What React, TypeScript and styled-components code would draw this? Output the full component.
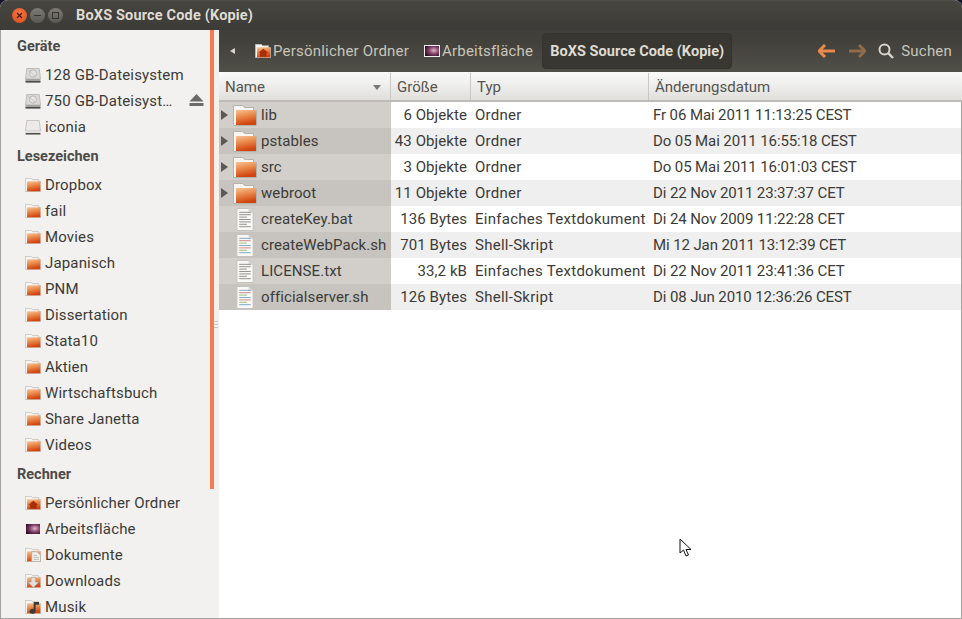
import React from "react";
import styled, { createGlobalStyle } from "styled-components";

const GlobalStyle = createGlobalStyle`
  html, body {
    margin: 0;
    padding: 0;
    background: #14142a;
  }
  body {
    font-family: Roboto, "Liberation Sans", sans-serif;
    font-size: 15px;
    color: #3c3b37;
  }
`;

const Window = styled.div`
  position: relative;
  width: 962px;
  height: 619px;
  overflow: hidden;
  display: flex;
  flex-direction: column;
  border-radius: 8px 8px 0 0;
  background: #f2f1ef;
`;

const TitleBar = styled.div`
  height: 30px;
  flex: none;
  box-sizing: border-box;
  display: flex;
  align-items: center;
  padding: 0 0 0 12px;
  background: linear-gradient(#52514c 0, #46453f 2px, #3c3b37 100%);
`;

const Controls = styled.div`
  display: flex;
  gap: 3px;
  margin-right: 13px;
`;

const WinButton = styled.div<{ $close?: boolean }>`
  width: 15px;
  height: 15px;
  border-radius: 50%;
  display: flex;
  align-items: center;
  justify-content: center;
  background: ${(p) =>
    p.$close
      ? "radial-gradient(circle at 50% 35%, #f47a45, #d9481c)"
      : "linear-gradient(#7b7a75, #5a5954)"};
`;

const Title = styled.div`
  font-weight: 700;
  font-size: 14.5px;
  color: #dfdbd2;
  letter-spacing: 0.17px;
`;

const Body = styled.div`
  flex: 1;
  min-height: 0;
  display: flex;
`;

const Sidebar = styled.div`
  position: relative;
  width: 219px;
  flex: none;
  box-sizing: border-box;
  overflow: hidden;
  border-left: 1px solid #a5a39d;
  border-bottom: 1px solid #a5a39d;
  background: #f2f1ef;
`;

const ScrollThumb = styled.div`
  position: absolute;
  top: 0;
  left: 209px;
  width: 4px;
  height: 459px;
  background: #f47b4e;
`;

const Grip = styled.div`
  position: absolute;
  top: 291px;
  left: 213px;
  width: 4px;
  height: 8px;
  background: repeating-linear-gradient(#c9c7c3 0 1px, transparent 1px 3px);
`;

const SectionTitle = styled.div`
  height: 32px;
  display: flex;
  align-items: center;
  padding-left: 16px;
  font-weight: 700;
  font-size: 14.5px;
  color: #4c4b47;
`;

const SideRow = styled.div`
  height: 26px;
  display: flex;
  align-items: center;
  padding-left: 24px;
  white-space: nowrap;
  position: relative;
`;

const SideLabel = styled.span`
  margin-left: 4px;
  color: #3c3b37;
  letter-spacing: 0.16px;
`;

const EjectIcon = styled.svg`
  position: absolute;
  left: 188px;
  top: 6px;
`;

const Main = styled.div`
  flex: 1;
  min-width: 0;
  display: flex;
  flex-direction: column;
`;

const Toolbar = styled.div`
  height: 42px;
  flex: none;
  box-sizing: border-box;
  display: flex;
  align-items: center;
  padding: 0 10px 0 11px;
  color: #c9c5b9;
  background: linear-gradient(#3f3e39 0, #42413c 30%, #504f48 100%);
`;

const BackTriangle = styled.div`
  width: 0;
  height: 0;
  border-top: 3.5px solid transparent;
  border-bottom: 3.5px solid transparent;
  border-right: 5px solid #d8d5cd;
  margin-right: 20px;
`;

const Crumb = styled.div<{ $gap: number }>`
  display: flex;
  align-items: center;
  margin-right: ${(p) => p.$gap}px;
  white-space: nowrap;
`;

const CrumbText = styled.span`
  margin-left: 2px;
  letter-spacing: 0.2px;
`;

const ActiveCrumb = styled.div`
  height: 36px;
  width: 190px;
  box-sizing: border-box;
  display: flex;
  align-items: center;
  justify-content: center;
  border-radius: 4px;
  font-weight: 700;
  font-size: 14.5px;
  letter-spacing: 0.04px;
  white-space: nowrap;
  color: #dfdbd2;
  background: #383732;
  border: 1px solid #34332f;
`;

const NavGroup = styled.div`
  margin-left: auto;
  display: flex;
  align-items: center;
`;

const NavArrow = styled.svg<{ $gap: number }>`
  margin-right: ${(p) => p.$gap}px;
`;

const SearchLabel = styled.span`
  margin-left: 7px;
  color: #c9c5b9;
  letter-spacing: 0.2px;
`;

const ListHeader = styled.div`
  height: 30px;
  flex: none;
  box-sizing: border-box;
  padding-top: 1px;
  display: grid;
  grid-template-columns: 172px 80px 178px 1fr;
  background: linear-gradient(#fbfbfa, #e0dfdc);
  border-bottom: 2px solid #bdbbb7;
`;

const HeaderCell = styled.div`
  position: relative;
  display: flex;
  align-items: center;
  padding-left: 6px;
  color: #55544f;
  border-right: 1px solid #c9c7c3;
  &:last-child {
    border-right: none;
  }
`;

const SortArrow = styled.div`
  position: absolute;
  right: 9px;
  top: 12px;
  width: 0;
  height: 0;
  border-left: 4.5px solid transparent;
  border-right: 4.5px solid transparent;
  border-top: 5px solid #7a7975;
`;

const List = styled.div`
  flex: 1;
  background: #fff;
  border-right: 1px solid #a5a39d;
  border-bottom: 1px solid #a5a39d;
`;

const Row = styled.div<{ $even: boolean }>`
  height: 26px;
  display: grid;
  grid-template-columns: 172px 80px 178px 1fr;
  align-items: center;
  white-space: nowrap;
  background: ${(p) => (p.$even ? "#efefef" : "#fff")};
`;

const NameCell = styled.div<{ $even: boolean }>`
  height: 100%;
  display: flex;
  align-items: center;
  background: ${(p) => (p.$even ? "#c7c4bf" : "#d2cfcb")};
`;

const Expander = styled.div<{ $show: boolean }>`
  width: 0;
  height: 0;
  margin: 0 5px 0 2px;
  border-top: 5px solid transparent;
  border-bottom: 5px solid transparent;
  border-left: 7px solid ${(p) => (p.$show ? "#5a5955" : "transparent")};
`;

const FileName = styled.span`
  margin-left: 4px;
  letter-spacing: 0.08px;
`;

const SizeCell = styled.div`
  text-align: right;
  padding-right: 4px;
  letter-spacing: 0.08px;
`;

const TypeCell = styled.div`
  padding-left: 4px;
  letter-spacing: 0.27px;
`;

const DateCell = styled.div`
  padding-left: 4px;
  letter-spacing: -0.1px;
`;

const Cursor = styled.svg`
  position: absolute;
  left: 679px;
  top: 538px;
`;

type IconKind = "folder" | "home" | "docs" | "down" | "music";

// small places-style folder, overlay depends on kind
const FolderIcon = ({ size, kind = "folder", id }: { size: number; kind?: IconKind; id: string }) => {
  const h = size * 0.875;
  return (
    <svg width={size} height={h} viewBox="0 0 24 21" style={{ flex: "none" }}>
      <defs>
        <linearGradient id={id} x1="0" y1="0" x2="0.25" y2="1">
          <stop offset="0" stopColor="#f7c496" />
          <stop offset="0.45" stopColor="#eb8c4e" />
          <stop offset="1" stopColor="#d2440f" />
        </linearGradient>
      </defs>
      <path d="M0.5 0.5h9l2 2h9v3h3v15h-23z" fill="#f6f5f2" stroke="#b5b2ac" strokeWidth="1" />
      <rect x="3" y="5" width="20" height="15" fill={`url(#${id})`} />
      {kind === "home" && (
        <path d="M12.5 7l7.5 6h-2.5v6h-10v-6h-2.5z" fill="#a8300a" />
      )}
      {kind === "docs" && (
        <g>
          <path d="M10 5.5h8l5.5 5v10h-13.5z" fill="#efeeea" stroke="#a9a7a2" strokeWidth="1.2" />
          <path d="M13 11h5M13 14h8M13 17h8" stroke="#b5b3ae" strokeWidth="1.2" />
        </g>
      )}
      {kind === "down" && (
        <path d="M9 5h7v7h5l-8.5 8.5L4 12h5z" fill="#e0dedb" stroke="#8e8c88" strokeWidth="0.8" />
      )}
      {kind === "music" && (
        <path d="M13 3h8v4h-5v10a4.5 3.6 0 1 1-3-3.4z" fill="#3c3b37" />
      )}
    </svg>
  );
};

const DesktopIcon = ({ id }: { id: string }) => (
  <svg width="16" height="12" viewBox="0 0 16 12" style={{ flex: "none" }}>
    <defs>
      <radialGradient id={id} cx="0.62" cy="0.45" r="0.65">
        <stop offset="0" stopColor="#e0b4c6" />
        <stop offset="0.55" stopColor="#7a3a60" />
        <stop offset="1" stopColor="#2c0f26" />
      </radialGradient>
    </defs>
    <rect x="0.5" y="0.5" width="15" height="11" fill={`url(#${id})`} stroke="#f2f1ef" />
  </svg>
);

const DiskIcon = ({ removable }: { removable?: boolean }) => (
  <svg width="16" height="15" viewBox="0 0 16 15" style={{ flex: "none" }}>
    <path
      d="M1.8 0.5h12.4l1.3 10.5h-15z"
      fill={removable ? "#ebeae8" : "#d9d9d7"}
      stroke={removable ? "#bcbbb8" : "#b4b3b0"}
      strokeWidth="0.8"
    />
    {!removable && (
      <>
        <circle cx="8" cy="5.5" r="3.6" fill="#e4e4e2" stroke="#a9a8a5" strokeWidth="0.7" />
        <path d="M4 2.5l6 6" stroke="#b4b3b0" strokeWidth="0.7" />
      </>
    )}
    <rect x="0.5" y="11" width="15" height="3.5" rx="0.8" fill={removable ? "#e2e1df" : "#a2a1a0"} />
    <rect x="0.5" y="13" width="15" height="1.5" rx="0.6" fill="#4d4c49" />
  </svg>
);

const TextFileIcon = ({ script }: { script?: boolean }) => {
  const lines = [4, 6.5, 9, 11.5, 14, 16.5, 19];
  const colors = ["#4a86b5", "#c0504d", "#6aa84f", "#4a86b5", "#c0504d", "#6aa84f", "#4a86b5"];
  return (
    <svg
      width="18"
      height="23"
      viewBox="0 0 18 24"
      style={{ flex: "none", marginLeft: "3px", marginRight: "3px" }}
    >
      <path d="M0.5 0.5h12l5 5v18h-17z" fill="#f8f8f6" stroke="#c2c0bb" />
      <path d="M12.5 0.5v5h5z" fill="#dededa" />
      {lines.map((y, i) => (
        <rect
          key={y}
          x="3"
          y={y}
          width={i % 3 === 2 ? 8 : 12}
          height="1"
          fill={script ? colors[i] : "#8f8e8a"}
          opacity={script ? 0.7 : 1}
        />
      ))}
    </svg>
  );
};

type Entry = { name: string; size: string; type: string; date: string; kind: "dir" | "text" | "script" };

const entries: Entry[] = [
  { name: "lib", size: "6 Objekte", type: "Ordner", date: "Fr 06 Mai 2011 11:13:25 CEST", kind: "dir" },
  { name: "pstables", size: "43 Objekte", type: "Ordner", date: "Do 05 Mai 2011 16:55:18 CEST", kind: "dir" },
  { name: "src", size: "3 Objekte", type: "Ordner", date: "Do 05 Mai 2011 16:01:03 CEST", kind: "dir" },
  { name: "webroot", size: "11 Objekte", type: "Ordner", date: "Di 22 Nov 2011 23:37:37 CET", kind: "dir" },
  { name: "createKey.bat", size: "136 Bytes", type: "Einfaches Textdokument", date: "Di 24 Nov 2009 11:22:28 CET", kind: "text" },
  { name: "createWebPack.sh", size: "701 Bytes", type: "Shell-Skript", date: "Mi 12 Jan 2011 13:12:39 CET", kind: "script" },
  { name: "LICENSE.txt", size: "33,2 kB", type: "Einfaches Textdokument", date: "Di 22 Nov 2011 23:41:36 CET", kind: "text" },
  { name: "officialserver.sh", size: "126 Bytes", type: "Shell-Skript", date: "Di 08 Jun 2010 12:36:26 CEST", kind: "script" },
];

const bookmarks = [
  "Dropbox",
  "fail",
  "Movies",
  "Japanisch",
  "PNM",
  "Dissertation",
  "Stata10",
  "Aktien",
  "Wirtschaftsbuch",
  "Share Janetta",
  "Videos",
];

const App = () => {
  return (
    <>
      <GlobalStyle />
      <Window>
        <TitleBar>
          <Controls>
            <WinButton $close>
              <svg width="7" height="7" viewBox="0 0 7 7">
                <path d="M1 1l5 5M6 1l-5 5" stroke="#4a1a08" strokeWidth="1.3" />
              </svg>
            </WinButton>
            <WinButton>
              <svg width="7" height="7" viewBox="0 0 7 7">
                <path d="M0 3.5h7" stroke="#35342f" strokeWidth="1.2" />
              </svg>
            </WinButton>
            <WinButton>
              <svg width="7" height="7" viewBox="0 0 7 7">
                <rect x="0.5" y="0.5" width="6" height="6" fill="none" stroke="#35342f" />
              </svg>
            </WinButton>
          </Controls>
          <Title>BoXS Source Code (Kopie)</Title>
        </TitleBar>
        <Body>
          <Sidebar>
            <ScrollThumb />
            <Grip />
            <SectionTitle>Geräte</SectionTitle>
            <SideRow>
              <DiskIcon />
              <SideLabel>128 GB-Dateisystem</SideLabel>
            </SideRow>
            <SideRow>
              <DiskIcon />
              <SideLabel>750 GB-Dateisyst…</SideLabel>
              <EjectIcon width="15" height="13" viewBox="0 0 15 13">
                <path d="M7.5 0L14.5 7.5H0.5z" fill="#6c6b67" />
                <rect x="0.5" y="9" width="14" height="3" fill="#6c6b67" />
              </EjectIcon>
            </SideRow>
            <SideRow>
              <DiskIcon removable />
              <SideLabel>iconia</SideLabel>
            </SideRow>
            <SectionTitle>Lesezeichen</SectionTitle>
            {bookmarks.map((b) => (
              <SideRow key={b}>
                <FolderIcon size={16} id={`bm-${b.replace(" ", "")}`} />
                <SideLabel>{b}</SideLabel>
              </SideRow>
            ))}
            <SectionTitle>Rechner</SectionTitle>
            <SideRow>
              <FolderIcon size={16} kind="home" id="pl-home" />
              <SideLabel>Persönlicher Ordner</SideLabel>
            </SideRow>
            <SideRow>
              <DesktopIcon id="pl-desk" />
              <SideLabel>Arbeitsfläche</SideLabel>
            </SideRow>
            <SideRow>
              <FolderIcon size={16} kind="docs" id="pl-docs" />
              <SideLabel>Dokumente</SideLabel>
            </SideRow>
            <SideRow>
              <FolderIcon size={16} kind="down" id="pl-down" />
              <SideLabel>Downloads</SideLabel>
            </SideRow>
            <SideRow>
              <FolderIcon size={16} kind="music" id="pl-music" />
              <SideLabel>Musik</SideLabel>
            </SideRow>
          </Sidebar>
          <Main>
            <Toolbar>
              <BackTriangle />
              <Crumb $gap={15}>
                <FolderIcon size={16} kind="home" id="tb-home" />
                <CrumbText>Persönlicher Ordner</CrumbText>
              </Crumb>
              <Crumb $gap={9}>
                <DesktopIcon id="tb-desk" />
                <CrumbText>Arbeitsfläche</CrumbText>
              </Crumb>
              <ActiveCrumb>BoXS Source Code (Kopie)</ActiveCrumb>
              <NavGroup>
                <NavArrow $gap={12} width="18" height="14" viewBox="0 0 18 14">
                  <path d="M7 1L1 7l6 6M1.5 7H17" fill="none" stroke="#e98a4c" strokeWidth="3" />
                </NavArrow>
                <NavArrow $gap={12} width="18" height="14" viewBox="0 0 18 14">
                  <path d="M11 1l6 6-6 6M16.5 7H1" fill="none" stroke="#8f6d4c" strokeWidth="3" />
                </NavArrow>
                <svg width="16" height="16" viewBox="0 0 16 16">
                  <circle cx="6.5" cy="6.5" r="5" fill="none" stroke="#d8d5cd" strokeWidth="2" />
                  <path d="M10.2 10.2L15 15" stroke="#d8d5cd" strokeWidth="2.4" />
                </svg>
                <SearchLabel>Suchen</SearchLabel>
              </NavGroup>
            </Toolbar>
            <ListHeader>
              <HeaderCell>
                Name
                <SortArrow />
              </HeaderCell>
              <HeaderCell>Größe</HeaderCell>
              <HeaderCell>Typ</HeaderCell>
              <HeaderCell>Änderungsdatum</HeaderCell>
            </ListHeader>
            <List>
              {entries.map((e, i) => (
                <Row key={e.name} $even={i % 2 === 1}>
                  <NameCell $even={i % 2 === 1}>
                    <Expander $show={e.kind === "dir"} />
                    {e.kind === "dir" ? (
                      <FolderIcon size={24} id={`row-${e.name}`} />
                    ) : (
                      <TextFileIcon script={e.kind === "script"} />
                    )}
                    <FileName>{e.name}</FileName>
                  </NameCell>
                  <SizeCell>{e.size}</SizeCell>
                  <TypeCell>{e.type}</TypeCell>
                  <DateCell>{e.date}</DateCell>
                </Row>
              ))}
            </List>
          </Main>
        </Body>
        <Cursor width="13" height="19" viewBox="0 0 13 19">
          <path d="M1 1v14l3.5-3 2.5 6 2.5-1-2.5-5.5h5z" fill="#fff" stroke="#111" strokeWidth="1" />
        </Cursor>
      </Window>
    </>
  );
};

export default App;
